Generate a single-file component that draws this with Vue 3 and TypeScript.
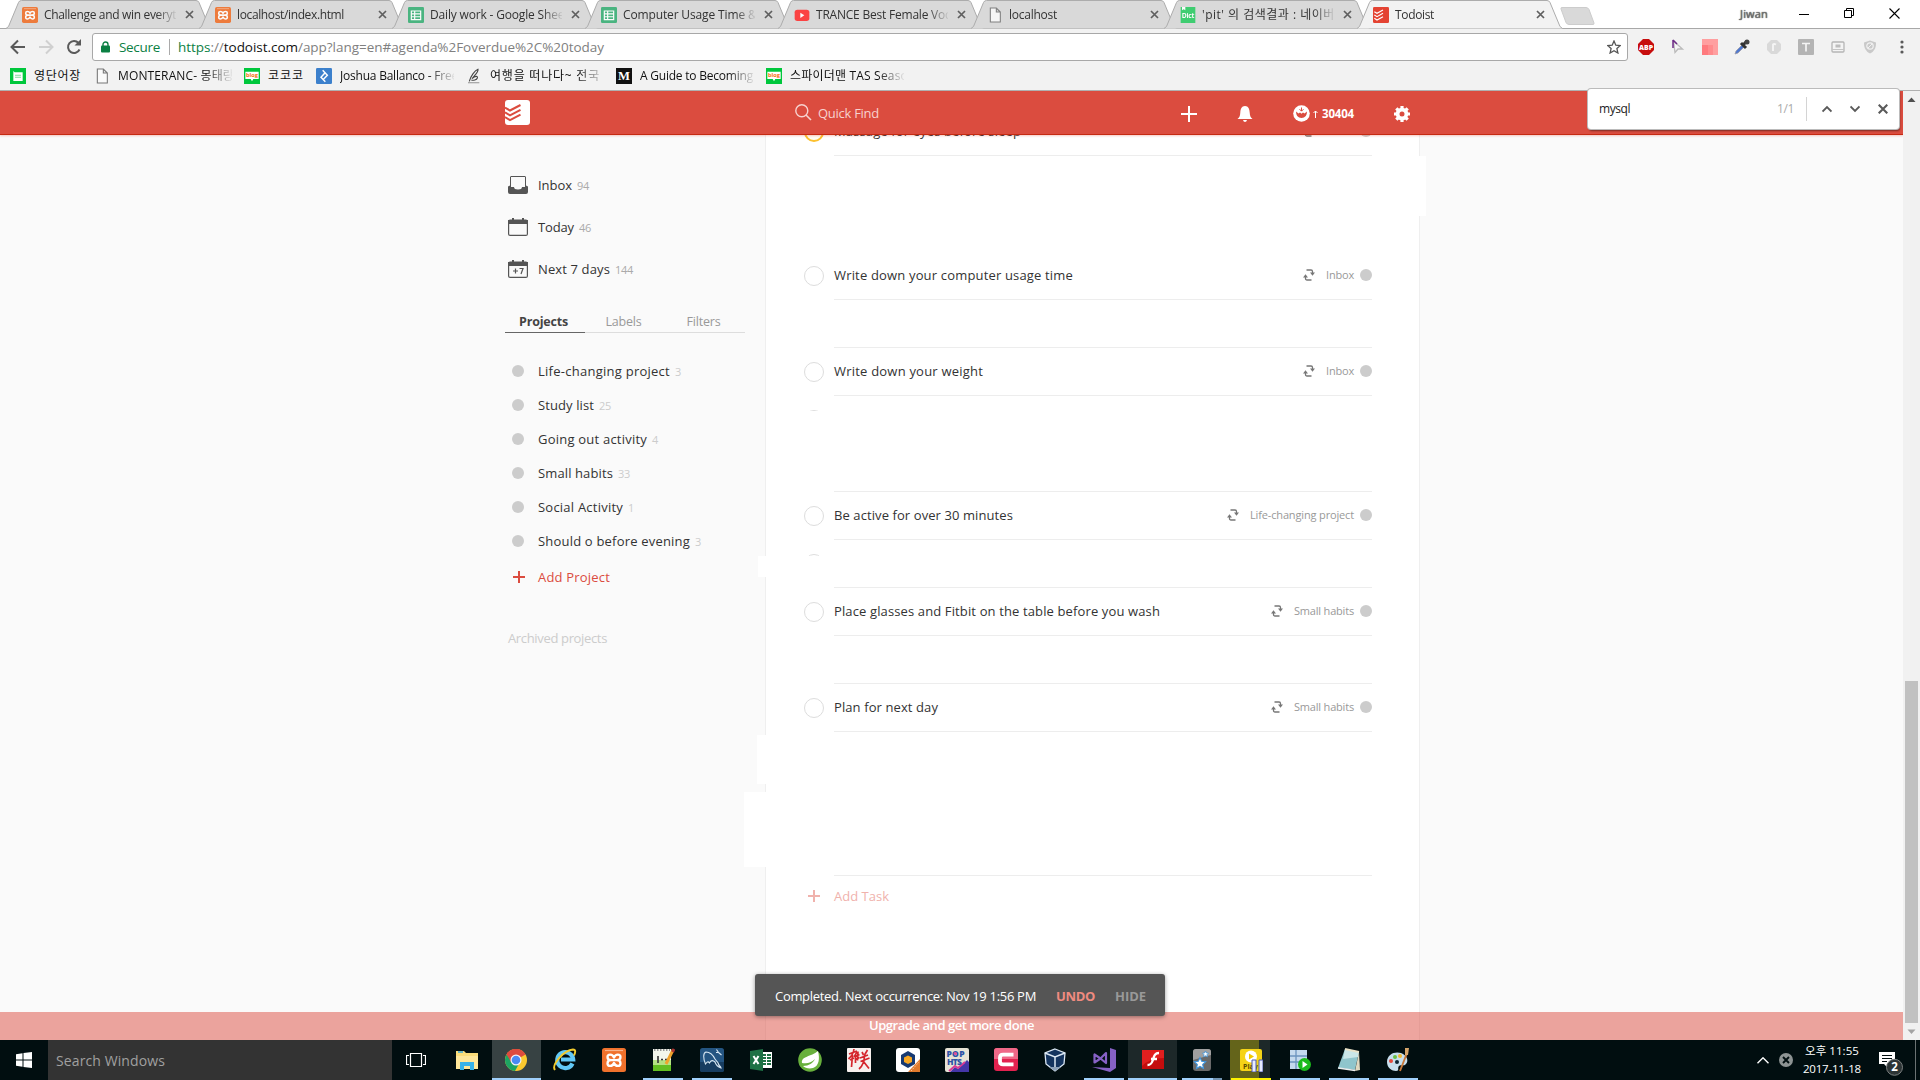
<script setup lang="ts">
import type { Directive } from 'vue'

interface Tab { title: string; icon: string; width?: number; active?: boolean }
interface Bookmark { title: string; icon: string; span: number; text: number; fade?: boolean }
interface Project { name: string; count: number; nameWidth: number; countWidth: number }
interface Row {
  title?: string
  project?: string
  titleWidth?: number
  projectWidth?: number
  line?: boolean
  priority?: boolean
  peek?: number
}
interface Task { icon: string; state?: string }

/* Spreads a label over the given number of pixels. */
const vFit: Directive<HTMLElement, number | undefined> = {
  mounted(el, binding) {
    if (!binding.value) return
    const range = document.createRange()
    range.selectNodeContents(el)
    const natural = range.getBoundingClientRect().width
    const chars = Math.max(1, (el.textContent ?? '').length)
    el.style.letterSpacing = `${((binding.value - natural) / chars).toFixed(3)}px`
  },
}

const xampp =
  '<rect x="0" y="0" width="24" height="24" rx="2.500" fill="#f0712c"/><path d="M3 2.500h18" stroke="#f9b48c" stroke-width="1.200"/><path d="M12 9.500C10.500 5.500 5.500 6 5.500 9c0 2 1.500 3.200 3.500 3.200-2 0-3.500 1-3.500 3.200 0 3.200 5 3.600 6.500-.4 1.500 4 6.500 3.600 6.500.4 0-2.200-1.500-3.200-3.500-3.200 2 0 3.500-1.200 3.500-3.200 0-3-5-3.500-6.500.500zM9 12.200h6" fill="none" stroke="#fff" stroke-width="2.300" stroke-linejoin="round"/>'
const sheet =
  '<rect x="0" y="0" width="24" height="24" rx="2" fill="#3bb077"/><path d="M5 6h14v13H5zM5 10.300h14M5 14.600h14M10 6v13" fill="none" stroke="#fff" stroke-width="1.800"/>'
const page = '<path d="M5 1.500h9l6 6v15H5zM14 1.500v6h6" fill="#fafafa" stroke="#777" stroke-width="1.600"/>'
const blog =
  '<rect width="24" height="24" fill="#00c73c"/><path d="M2 5.500h20v11h-8l-2 3.500-2-3.500H2z" fill="#fff"/><text x="3" y="14" font-size="8.500" font-weight="700" textLength="18" lengthAdjust="spacingAndGlyphs" fill="#f5700f" font-family="Open Sans">blog</text>'

const icons: Record<string, string> = {
  xampp,
  sheet,
  page,
  blog,
  youtube: '<rect x="1" y="4" width="22" height="17" rx="4" fill="#f33"/><path d="M9.500 8.500v8l6-4z" fill="#fff"/>',
  dict: '<rect width="22" height="24" x="1" y="0" fill="#2fcc66"/><path d="M3 0h5v5L5.500 3.500 3 5z" fill="#fff"/><text x="2.500" y="16.500" font-size="10" font-weight="700" textLength="19" fill="#fff" font-family="Open Sans">Dict</text>',
  todoist:
    '<rect width="24" height="24" rx="2" fill="#e44332"/><path d="M2 7l4 2.500 9-5M2 12l4 2.500 9-5M2 17l4 2.500 9-5" fill="none" stroke="#fff" stroke-width="1.700"/>',
  word: '<rect width="24" height="24" fill="#00c73c"/><path d="M5 4.500l2 2h12v13H5z" fill="#fff"/><path d="M7.500 11h9M7.500 14h9" stroke="#7fdc9c" stroke-width="1.600"/>',
  toptal: '<rect width="24" height="24" rx="2" fill="#3c80cc"/><path d="M10 3.500l7 7.500-6.500 6.500M14 20.500L7.500 14 13 8" fill="none" stroke="#fff" stroke-width="2.200"/>',
  quill: '<path d="M3 22h17" stroke="#aaa" stroke-width="2"/><path d="M5 20C7 12 13 4 18 2c1 4-6 10-9 14 5-5 9-4 8-1s-6 4-9 3" fill="none" stroke="#444" stroke-width="1.700"/>',
  medium: '<rect width="24" height="24" fill="#111"/><text x="12" y="18" font-size="19" font-weight="700" text-anchor="middle" fill="#fff" font-family="Liberation Serif">M</text>',

  explorer: '<path d="M1 3h8l2 2h12v16H1z" fill="#fbdd7a"/><path d="M1 8h22v13H1z" fill="#ffe79a"/><path d="M3 4h5" stroke="#3aa6dd" stroke-width="1.500"/><path d="M5 14h14v8h-4v-4H9v4H5z" fill="#38b2e8"/>',
  chrome:
    '<circle cx="12" cy="12" r="11" fill="#fbc92f"/><path d="M12 12L2.500 6.500A11 11 0 0 1 21.500 6.500z" fill="#dd4b3e"/><path d="M2.500 6.500A11 11 0 0 0 11 23l5-9-4-2z" fill="#1da462"/><path d="M12 6.500h9.500A11 11 0 0 0 2.500 6.500L7 14z" fill="#dd4b3e"/><circle cx="12" cy="12" r="5.500" fill="#f4f4f4"/><circle cx="12" cy="12" r="4.300" fill="#4a8af4"/>',
  ie: '<path d="M19.500 15.500a8 8 0 1 1 .7-4H8" fill="none" stroke="#62c8f5" stroke-width="4.200"/><path d="M2 22C-2 17 11 2 20 1.500c3 0 2.500 3 1 6" fill="none" stroke="#f2cb2e" stroke-width="1.900"/>',
  notepp:
    '<path d="M2 1h18v22H2z" fill="#f3f6ec"/><path d="M2 12h18v11H2z" fill="#b4e283"/><path d="M2 17h18v6H2z" fill="#63bf22"/><path d="M3 2h16" stroke="#999" stroke-dasharray="1.500 1.500" stroke-width="2"/><path d="M7 8v7M10 11.500h2M14 11.500h2" stroke="#333" stroke-width="1.600"/><path d="M22 2l-7 14" stroke="#efa22c" stroke-width="3"/><path d="M23 1l-1.500 3" stroke="#a33" stroke-width="3"/>',
  mysql:
    '<rect x="0" y="0" width="24" height="24" rx="2.500" fill="#245582"/><path d="M0 14h24v7.500q0 2.500-2.500 2.500h-19Q0 24 0 21.500z" fill="#173d61"/><path d="M5.500 16C3 10 3 5 6 4c5 0 7 3 9 7 2 3 3 3 3.500 5 .5 2 2 2 2.500 4-3-1-5-3-6-6-2-2-4-2-5.500 1-1.500-2-2.500-1-4 1zM16.500 1.500l2 3h-2.500M18.500 4.500l3 2.500" fill="none" stroke="#d6e6f2" stroke-width="1.100"/>',
  excel:
    '<rect x="12" y="4" width="11" height="16" fill="#fff"/><path d="M14 7h3m1 0h4M14 10h3m1 0h4M14 13h3m1 0h4M14 16h3m1 0h4" stroke="#1e7145" stroke-width="2"/><path d="M1 3l13-2v22L1 21z" fill="#1e7145"/><path d="M4.500 8l5 8M9.500 8l-5 8" stroke="#fff" stroke-width="2"/>',
  spring: '<circle cx="12" cy="12" r="11.800" fill="#68b03c"/><path d="M20 3c2 8 1 15-5 17-4 1-8 0-10-2 6 0 10-3 12-7-4 4-8 5-13 4C3 8 13 9 20 3z" fill="#fff"/>',
  brush:
    '<rect width="24" height="24" rx="1" fill="#f7f0ee"/><path d="M2 6l8-3M7 1C6.500 5 5 8 1.500 11M5.500 7L4.500 19M3 12l4-2M10 4L7 9M8.500 7v8M8.500 8.500l4-2M8.500 11.500l4-2M11 3.500l-.5 9M15 4l1.500 3M20.500 2l-3 5M13 10l8-3M13.500 13.500l9-3.500M17.500 7c0 6-2 11-5.500 14M16.500 13.500l5.500 7" fill="none" stroke="#d5262d" stroke-width="1.700"/>',
  hexagon:
    '<rect width="24" height="24" rx="3" fill="#fff"/><path d="M12 3l7 4v9l-7 4-7-4V7z" fill="#173a73"/><path d="M12 7.500l4 2v4.500l-4 2-4-2V9.500z" fill="#f9a823"/><path d="M24 11v13H12z" fill="#e07a2d"/><path d="M15 23l8-9" stroke="#f9c79a" stroke-width="1" stroke-dasharray="1.500 1"/>',
  pop: '<rect width="24" height="24" rx="2" fill="#e6e3d6"/><path d="M5 24l5-5 3 2 9-9 2 2v10z" fill="#4436a8"/><path d="M4 23l6-5 3 2 7-6" fill="none" stroke="#d93a96" stroke-width="2"/><text fill="#2d52a5" font-family="Open Sans" font-weight="800" font-size="8.500"><tspan x="1.500" y="8.500" textLength="18">POP</tspan><tspan x="2" y="16.500" textLength="15">HTS</tspan></text><circle cx="10.300" cy="5.500" r="1.600" fill="#e24a94"/>',
  cyan: '<rect width="24" height="23" rx="3" fill="#e2224f"/><path d="M0 11V3a3 3 0 0 1 3-3h18a3 3 0 0 1 3 3v8z" fill="#ef6888"/><path d="M19.500 6.700H9Q6 6.700 6 9.500v4Q6 16.300 9 16.300H19.500" fill="none" stroke="#fff" stroke-width="3.800"/>',
  vbox: '<path d="M12 1l10 4-1 11-9 7-9-7L2 5z" fill="#14345f" stroke="#dce8f4" stroke-width="1.300"/><path d="M2 5l10 4 10-4M12 9v14" fill="none" stroke="#dce8f4" stroke-width="1.500"/><path d="M6 19l6 4 6-4" fill="#8ba0b8"/>',
  vs: '<path d="M18 0l6 2v18l-6 4L0 19l18 1z" fill="#8661c5"/><path d="M2.500 6.500v8L8.500 10.500l5.500 4.500V5L8.500 10.500z" fill="none" stroke="#8661c5" stroke-width="2.200" stroke-linejoin="round"/>',
  flash: '<rect x="1" y="2" width="22" height="19" fill="#c40d0d"/><path d="M1 2h22v8q-14 0-22 8z" fill="#e11f1f"/><path d="M18 5c-5 0-5 4-6.500 8-1 3-2 4-5 4M10 11h6" fill="none" stroke="#fff" stroke-width="2.300"/>',
  stars: '<rect x="3" y="1" width="18" height="22" rx="3" fill="#6a6a6a"/><path d="M3 4q0-3 3-3h12q3 0 3 3v3L3 12z" fill="#a0a0a0"/><path d="M10 9.500l1.700 3.700 4 .5-3 2.800.8 4-3.500-2-3.500 2 .8-4-3-2.800 4-.5z" fill="#fff" stroke="#3d94dd" stroke-width="1.100"/><path d="M15.500 3l.9 1.900 2.100.3-1.500 1.500.4 2.100-1.900-1-1.900 1 .4-2.100-1.500-1.500 2.100-.3z" fill="#fff" stroke="#3d94dd" stroke-width=".8"/>',
  pot: '<rect x="1" y="1" width="22" height="22" rx="2" fill="#f5d317"/><circle cx="12" cy="8.500" r="6" fill="#fff"/><path d="M10 5.500v6l5-3z" fill="#f0c800"/><text x="4" y="21" font-size="7" font-weight="700" fill="#5a4c00" font-family="Open Sans">Play</text><path d="M13 12h4v12h-4zM20 12h4v12h-4z" fill="#e8ecff" stroke="#4d58b0" stroke-width="1"/>',
  server: '<rect x="2" y="2" width="17" height="19" fill="#c4d9ee"/><path d="M2 8h17M2 14h17M8 2v19" stroke="#6b93bf" stroke-width="1.300"/><circle cx="16.500" cy="16.500" r="6.500" fill="#1cba1c"/><path d="M14.500 13v7l5-3.500z" fill="#fff"/>',
  notepad: '<path d="M8 1l14 3-4 18-17-2z" fill="#8fc5cc"/><path d="M8 1l14 3-1 5-15 2z" fill="#c9e6e8"/><path d="M8 1l14 3" stroke="#e9e2c8" stroke-width="2"/><path d="M22 4l1 18-5 1z" fill="#dfd8c0"/><path d="M1 20l17 2.500" stroke="#eee" stroke-width="1.300"/>',
  paint: '<path d="M1 14C1 6 9 3 15 5s8 8 5 11-5 0-7 2 1 5-3 5-9-3-9-9z" fill="#c7dfee"/><circle cx="5" cy="13" r="2" fill="#e3493c"/><circle cx="9" cy="9" r="2" fill="#69bf45"/><circle cx="14" cy="8" r="2" fill="#f0b72f"/><circle cx="11" cy="14" r="2" fill="#0b2533"/><path d="M21 5l-7 18" stroke="#c9793a" stroke-width="1.900"/><path d="M19 0h4l-1 7h-3z" fill="#d6a56b"/>',
}

const tabs: Tab[] = [
  { title: 'Challenge and win everythi', icon: 'xampp', width: 142 },
  { title: 'localhost/index.html', icon: 'xampp', width: 107 },
  { title: 'Daily work - Google Sheets', icon: 'sheet', width: 144 },
  { title: 'Computer Usage Time & S', icon: 'sheet', width: 143 },
  { title: 'TRANCE Best Female Voca', icon: 'youtube', width: 141 },
  { title: 'localhost', icon: 'page', width: 48 },
  { title: "'pit' 의 검색결과 : 네이버 사", icon: 'dict', width: 148 },
  { title: 'Todoist', icon: 'todoist', width: 39, active: true },
]

const bookmarks: Bookmark[] = [
  { title: '영단어장', icon: 'word', span: 84, text: 47 },
  { title: 'MONTERANC- 몽태랑', icon: 'page', span: 150, text: 116, fade: true },
  { title: '코코코', icon: 'blog', span: 72, text: 36 },
  { title: 'Joshua Ballanco - Free', icon: 'toptal', span: 150, text: 118, fade: true },
  { title: '여행을 떠나다~ 전국', icon: 'quill', span: 150, text: 110, fade: true },
  { title: 'A Guide to Becoming', icon: 'medium', span: 150, text: 113, fade: true },
  { title: '스파이더맨 TAS Seaso', icon: 'blog', span: 150, text: 118, fade: true },
]

const projects: Project[] = [
  { name: 'Life-changing project', count: 3, nameWidth: 132, countWidth: 6 },
  { name: 'Study list', count: 25, nameWidth: 56, countWidth: 12 },
  { name: 'Going out activity', count: 4, nameWidth: 109, countWidth: 6 },
  { name: 'Small habits', count: 33, nameWidth: 75, countWidth: 12 },
  { name: 'Social Activity', count: 1, nameWidth: 85, countWidth: 6 },
  { name: 'Should o before evening', count: 3, nameWidth: 152, countWidth: 6 },
]

const rows: Row[] = [
  { title: 'Massage for eyes before sleep', titleWidth: 187, project: 'Inbox', projectWidth: 28, line: true, priority: true },
  {},
  {},
  { title: 'Write down your computer usage time', titleWidth: 239, project: 'Inbox', projectWidth: 28, line: true },
  { line: true },
  { title: 'Write down your weight', titleWidth: 149, project: 'Inbox', projectWidth: 28, line: true },
  { peek: 1 },
  { line: true },
  { title: 'Be active for over 30 minutes', titleWidth: 179, project: 'Life-changing project', projectWidth: 104, line: true },
  { line: true, peek: 2 },
  { title: 'Place glasses and Fitbit on the table before you wash', titleWidth: 326, project: 'Small habits', projectWidth: 60, line: true },
  { line: true },
  { title: 'Plan for next day', titleWidth: 104, project: 'Small habits', projectWidth: 60, line: true },
  {},
  {},
  { line: true },
]

const apps: Task[] = [
  { icon: 'explorer' },
  { icon: 'chrome', state: 'current' },
  { icon: 'ie' },
  { icon: 'xampp' },
  { icon: 'notepp', state: 'open' },
  { icon: 'mysql', state: 'open' },
  { icon: 'excel' },
  { icon: 'spring' },
  { icon: 'brush' },
  { icon: 'hexagon' },
  { icon: 'pop' },
  { icon: 'cyan' },
  { icon: 'vbox' },
  { icon: 'vs', state: 'open' },
  { icon: 'flash', state: 'lit' },
  { icon: 'stars', state: 'open stacked' },
  { icon: 'pot', state: 'progress' },
  { icon: 'server', state: 'open' },
  { icon: 'notepad', state: 'open' },
  { icon: 'paint', state: 'open' },
]
</script>

<template>
  <div class="screen">
    <div class="tabstrip">
      <div v-for="(t, i) in tabs" :key="i" class="tab" :class="{ active: t.active }">
        <svg class="tab-shape" width="206" height="29" viewBox="0 0 206 29">
          <path
            d="M0 28.500L2.500 26.500 12.500 2.500Q13.300.5 15.500.5H190Q192 .5 193 2.500L203 26.500 205.500 28.500"
            :fill="t.active ? '#f2f2f2' : '#d9d9d9'"
            stroke="#acacac"
          />
        </svg>
        <svg class="favicon" viewBox="0 0 24 24" v-html="icons[t.icon]" />
        <div class="tab-title"><span v-fit="t.width">{{ t.title }}</span></div>
        <svg class="tab-close" width="9" height="9" viewBox="0 0 9 9"><path d="M1 1l7 7M8 1l-7 7" stroke="#5f5f5f" stroke-width="1.700" /></svg>
      </div>
      <svg class="new-tab" width="35" height="18" viewBox="0 0 35 18">
        <path d="M2 .5H26Q28 .5 29 2.500L34 16Q34.300 17.500 33 17.500H9Q7 17.500 6 15.500L1 2Q.5.5 2 .5z" fill="#d9d9d9" stroke="#ccc" />
      </svg>
      <div class="window-controls">
        <span class="user" v-fit="28">Jiwan</span>
        <svg width="10" height="11" viewBox="0 0 10 11"><path d="M0 6.500h10" stroke="#000" /></svg>
        <svg width="10" height="10" viewBox="0 0 10 10"><path d="M.5 2.500h7v7h-7zM2.500 2V.5h7v7H8" fill="none" stroke="#000" /></svg>
        <svg width="11" height="11" viewBox="0 0 11 11"><path d="M.5.5l10 10M10.500.5l-10 10" stroke="#000" stroke-width="1.100" /></svg>
      </div>
    </div>

    <div class="toolbar">
      <div class="nav">
        <svg width="16" height="16" viewBox="0 0 16 16"><path d="M15 8H2M8 1.500L1.500 8 8 14.500" fill="none" stroke="#5a5a5a" stroke-width="2" /></svg>
        <svg width="16" height="16" viewBox="0 0 16 16"><path d="M1 8h13M8 1.500L14.500 8 8 14.500" fill="none" stroke="#d0d0d0" stroke-width="2" /></svg>
        <svg width="16" height="16" viewBox="0 0 16 16"><path d="M13.500 10.500A6 6 0 1 1 12.500 4" fill="none" stroke="#5a5a5a" stroke-width="2" /><path d="M15 0v6.500H8.500z" fill="#5a5a5a" /></svg>
        <div class="omnibox">
          <svg width="9" height="12" viewBox="0 0 9 12"><path d="M2 6V3.500a2.500 2.500 0 0 1 5 0V6" fill="none" stroke="#0b8043" stroke-width="1.400" /><rect y="4.500" width="9" height="7" rx="1" fill="#0b8043" /></svg>
          <span class="secure" v-fit="41">Secure</span>
          <i class="sep" />
          <span class="url" v-fit="426"><b class="green">https</b><b>://</b><b class="host">todoist.com</b><b>/app?lang=en#agenda%2Foverdue%2C%20today</b></span>
          <svg class="star" width="14" height="14" viewBox="0 0 14 14"><path d="M7 1l1.800 4.200 4.500.4-3.400 3 1 4.400L7 10.700 3.100 13l1-4.400-3.400-3 4.500-.4z" fill="none" stroke="#555" stroke-width="1.300" /></svg>
        </div>
        <div class="extensions">
          <svg viewBox="0 0 16 16"><path d="M5 0h6l5 5v6l-5 5H5l-5-5V5z" fill="#c70d0d" /><text x="1" y="11" font-size="7.500" font-weight="800" fill="#fff" textLength="14" lengthAdjust="spacingAndGlyphs" font-family="Open Sans">ABP</text></svg>
          <svg viewBox="0 0 16 16"><path d="M3.500 2l9 8H8l-3 3.500z" fill="#f6f6f6" stroke="#bbb" stroke-width="1.300" /><path d="M3 1v8M3 1l4 4" stroke="#6d2b86" stroke-width="1.500" /></svg>
          <svg viewBox="0 0 16 16"><path d="M0 0h16v16H0z" fill="#ff9fa0" /><path d="M0 6h6v10H0z" fill="#ff7a7e" /><path d="M6 6h5v10H6z" fill="#ff8b8d" /></svg>
          <svg viewBox="0 0 16 16"><path d="M1 15l1-3 6-6 2 2-6 6z" fill="#4e78cf" stroke="#99a" stroke-width=".8" /><path d="M7 4l5 5M9 6l4-4" stroke="#333" stroke-width="3" /><circle cx="13" cy="3" r="2.500" fill="#444" /></svg>
          <svg viewBox="0 0 16 16"><path d="M5 1h6l4 4v6l-4 4H5l-4-4V5z" fill="#d9d9d9" /><path d="M7 12V5.500q1-1 3 0" fill="none" stroke="#f5f5f5" stroke-width="1.800" /></svg>
          <svg viewBox="0 0 16 16"><rect width="16" height="16" rx="1" fill="#b4b4b4" /><path d="M4 4.500h8M8 4.500v8" stroke="#f4f4f4" stroke-width="1.700" /></svg>
          <svg viewBox="0 0 16 16"><rect x="2" y="3" width="12" height="10" rx="1" fill="#f4f4f4" stroke="#b5b5b5" stroke-width="1.300" /><path d="M5.500 5.500h5v3h-5z" fill="#bdbdbd" /><path d="M2 10.500h12" stroke="#c4c4c4" /></svg>
          <svg viewBox="0 0 16 16"><path d="M8 1.500l6 2q.5 8-6 11-6.500-3-6-11z" fill="#c9c9c9" /><circle cx="8" cy="7" r="3.200" fill="none" stroke="#f1f1f1" stroke-width="1.200" /><path d="M6 9l4-4" stroke="#f1f1f1" /></svg>
          <svg viewBox="0 0 16 16"><g fill="#5a5a5a"><circle cx="8" cy="3" r="1.600" /><circle cx="8" cy="8" r="1.600" /><circle cx="8" cy="13" r="1.600" /></g></svg>
        </div>
      </div>
      <div class="bookmarks">
        <div v-for="b in bookmarks" :key="b.title" class="bookmark" :style="{ width: b.span + 'px' }">
          <svg class="favicon" viewBox="0 0 24 24" v-html="icons[b.icon]" />
          <div :class="{ fade: b.fade }"><span v-fit="b.text">{{ b.title }}</span></div>
        </div>
      </div>

      <div class="findbar">
        <span class="query"><span v-fit="31">mysql</span></span>
        <span class="matches"><span v-fit="17">1/1</span></span>
        <i />
        <svg width="10" height="10" viewBox="0 0 10 10"><path d="M.5 7.500L5 3l4.500 4.500" fill="none" stroke="#5a5a5a" stroke-width="1.900" /></svg>
        <svg width="10" height="10" viewBox="0 0 10 10"><path d="M.5 2.500L5 7l4.500-4.500" fill="none" stroke="#5a5a5a" stroke-width="1.900" /></svg>
        <svg width="10" height="10" viewBox="0 0 10 10"><path d="M.7.7l8.600 8.600M9.300.7L.7 9.300" stroke="#5a5a5a" stroke-width="2.100" /></svg>
      </div>
    </div>

    <div class="viewport">
      <div class="page">
        <header class="topbar">
          <svg class="logo" width="25" height="25" viewBox="0 0 25 25">
            <rect width="25" height="25" rx="3" fill="#fff" />
            <path d="M0 7.500l5 3L15.500 5M0 12.300l5 3L15.500 9.800M0 17.100l5 3L15.500 14.600" fill="none" stroke="#db4c3f" stroke-width="2" />
          </svg>
          <div class="quick-find">
            <svg width="17" height="17" viewBox="0 0 17 17"><circle cx="6.800" cy="6.800" r="6" fill="none" stroke="#f7d2cf" stroke-width="1.400" /><path d="M11 11l5 5" stroke="#f7d2cf" stroke-width="1.600" /></svg>
            <span v-fit="61">Quick Find</span>
          </div>
          <div class="actions">
            <svg width="16" height="16" viewBox="0 0 16 16"><path d="M0 8h16M8 0v16" stroke="#fff" stroke-width="2" /></svg>
            <svg width="16" height="16" viewBox="0 0 16 16"><path d="M8 0c3.500 0 4.500 3 4.700 6.500.2 3.500.8 5 2.800 6.500H.5c2-1.500 2.600-3 2.800-6.500C3.500 3 4.500 0 8 0zM6 14h4q-.5 2-2 2t-2-2z" fill="#fff" /></svg>
            <div class="karma">
              <svg width="17" height="17" viewBox="0 0 17 17"><circle cx="8.500" cy="8.500" r="8.300" fill="#fff" /><path d="M3 6.500l2.500 2 1.500-1 1.500 1.200L10 7.500l1.500 1 2.500-2q0 6.500-5.500 6.500T3 6.500z" fill="#db4c3f" /><path d="M8.500 2.500v3.500M6.500 4.200l2 2 2-2" fill="none" stroke="#db4c3f" /></svg>
              <svg width="5" height="8" viewBox="0 0 5 8"><path d="M2.500 8V1M.5 3l2-2 2 2" fill="none" stroke="#fff" /></svg>
              <b v-fit="32">30404</b>
            </div>
            <svg width="16" height="16" viewBox="0 0 16 16">
              <circle cx="8" cy="8" r="4.400" fill="none" stroke="#fff" stroke-width="3.800" />
              <path d="M8 0v3M8 13v3M0 8h3M13 8h3M2.300 2.300l2.200 2.200M11.500 11.500l2.200 2.200M2.300 13.700l2.200-2.200M11.500 4.500l2.200-2.200" stroke="#fff" stroke-width="3.200" />
            </svg>
          </div>
        </header>

        <div class="content">
          <aside class="sidebar">
            <ul class="filters">
              <li>
                <svg width="20" height="18" viewBox="0 0 20 18"><path d="M2.500 11V1q0-.5.5-.5h14q.5 0 .5.500V11" fill="none" stroke="#555" /><path d="M0 10.500l2-1V11h4q0 2.500 4 2.500t4-2.500h4V9.500l2 1V16q0 2-2 2H2q-2 0-2-2z" fill="#555" /></svg>
                <span v-fit="34">Inbox</span><small v-fit="12">94</small>
              </li>
              <li>
                <svg width="20" height="18" viewBox="0 0 20 18"><rect x=".6" y="2" width="18.800" height="15.400" rx="1.500" fill="none" stroke="#555" stroke-width="1.200" /><path d="M0 2h20v4H0zM4 0h2v3H4zM14 0h2v3h-2z" fill="#555" /></svg>
                <span v-fit="36">Today</span><small v-fit="12">46</small>
              </li>
              <li>
                <svg width="20" height="18" viewBox="0 0 20 18"><rect x=".6" y="2" width="18.800" height="15.400" rx="1.500" fill="none" stroke="#555" stroke-width="1.200" /><path d="M0 2h20v4H0zM4 0h2v3H4zM14 0h2v3h-2z" fill="#555" /><path d="M5 11h5M7.500 8.500v5M11.500 8.500h3.500l-2 5.500" fill="none" stroke="#555" stroke-width="1.200" /></svg>
                <span v-fit="72">Next 7 days</span><small v-fit="18">144</small>
              </li>
            </ul>
            <nav class="switcher">
              <div class="on"><span v-fit="49">Projects</span></div>
              <div><span v-fit="36">Labels</span></div>
              <div><span v-fit="34">Filters</span></div>
            </nav>
            <ul class="projects">
              <li v-for="p in projects" :key="p.name">
                <i class="dot" /><span v-fit="p.nameWidth">{{ p.name }}</span><small v-fit="p.countWidth">{{ p.count }}</small>
              </li>
            </ul>
            <div class="add-project">
              <svg width="12" height="12" viewBox="0 0 12 12"><path d="M0 6h12M6 0v12" stroke="#db4c3f" stroke-width="2" /></svg>
              <span v-fit="72">Add Project</span>
            </div>
            <div class="archived"><span v-fit="99">Archived projects</span></div>
          </aside>

          <section class="agenda">
            <i class="patch p1" /><i class="patch p2" /><i class="patch p3" /><i class="patch p4" />
            <div v-for="(r, i) in rows" :key="i" class="row">
              <div class="check-cell">
                <div v-if="r.peek" class="peek" :style="{ height: r.peek + 'px' }"><i class="check" /></div>
                <i v-if="r.title" class="check" :class="{ priority: r.priority }" />
              </div>
              <div class="row-body" :class="{ line: r.line }">
                <template v-if="r.title">
                  <span class="title" v-fit="r.titleWidth">{{ r.title }}</span>
                  <svg class="repeat" width="12" height="12" viewBox="0 0 12 12"><path d="M3.500 1H8Q9.500 1 9.500 2.500V4M8.500 11H4Q2.500 11 2.500 9.500V8" fill="none" stroke="#777" stroke-width="1.300" /><path d="M7 3.500h5L9.500 6.800zM0 8.500h5L2.500 5.200z" fill="#777" /></svg>
                  <span class="project" v-fit="r.projectWidth">{{ r.project }}</span>
                  <i class="dot" />
                </template>
              </div>
            </div>
            <div class="add-task">
              <svg width="12" height="12" viewBox="0 0 12 12"><path d="M0 6h12M6 0v12" stroke="#f0b2ac" stroke-width="2" /></svg>
              <span v-fit="55">Add Task</span>
            </div>
          </section>
        </div>

        <div class="upgrade"><span v-fit="165">Upgrade and get more done</span></div>
        <div class="toast">
          <span v-fit="261">Completed. Next occurrence: Nov 19 1:56 PM</span>
          <b class="undo" v-fit="39">UNDO</b>
          <b class="hide" v-fit="31">HIDE</b>
        </div>
      </div>
      <div class="scrollbar">
        <svg width="17" height="17" viewBox="0 0 17 17"><path d="M4.500 11h8l-4-4.500z" fill="#505050" /></svg>
        <div class="track"><div class="thumb" /></div>
        <svg width="17" height="17" viewBox="0 0 17 17"><path d="M4.500 6.500h8l-4 4.500z" fill="#a3a3a3" /></svg>
      </div>
    </div>

    <footer class="taskbar">
      <div class="start"><svg width="16" height="16" viewBox="0 0 16 16"><path d="M0 2.200L6.500 1.200V7.500H0zM7.500 1L16 0v7.500H7.500zM0 8.500h6.500v6.300L0 13.800zM7.500 8.500H16V16l-8.500-1z" fill="#fff" /></svg></div>
      <div class="search"><span v-fit="109">Search Windows</span></div>
      <div class="task-view"><svg width="20" height="14" viewBox="0 0 20 14"><path d="M4.500.5h11v13h-11zM3 2.500H.5v9H3M17 2.500h2.500v9H17" fill="none" stroke="#fff" stroke-width="1.200" /></svg></div>
      <div class="apps">
        <div v-for="a in apps" :key="a.icon" class="app" :class="a.state">
          <svg width="24" height="24" viewBox="0 0 24 24" v-html="icons[a.icon]" />
        </div>
      </div>
      <div class="tray">
        <svg width="12" height="7" viewBox="0 0 12 7"><path d="M.5 6.300L6 .8l5.500 5.500" fill="none" stroke="#fff" stroke-width="1.400" /></svg>
        <svg width="14" height="14" viewBox="0 0 14 14"><circle cx="7" cy="7" r="7" fill="#8d9393" /><path d="M4 4l6 6M10 4l-6 6" stroke="#010e10" stroke-width="1.900" /></svg>
        <div class="clock"><span v-fit="54">오후 11:55</span><span v-fit="58">2017-11-18</span></div>
        <svg class="notice" width="25" height="25" viewBox="0 0 25 25">
          <path d="M0 1h16v12H8l0 3-3-3H0z" fill="#fff" /><path d="M3 4.500h10M3 7.500h10M3 10.500h5" stroke="#010e10" />
          <circle cx="15.500" cy="16.300" r="8" fill="#2c3435" stroke="#7c8080" /><text x="15.500" y="20.300" font-size="11.500" font-weight="700" text-anchor="middle" fill="#fff" font-family="Open Sans">2</text>
        </svg>
        <i class="peek-line" />
      </div>
    </footer>
  </div>
</template>

<style>
body {
  margin: 0;
  overflow: hidden;
}
</style>

<style scoped>
.screen {
  width: 1920px;
  height: 1080px;
  display: flex;
  flex-direction: column;
  overflow: hidden;
  background: #fff;
  color: #333;
  font-family: "Open Sans", "Noto Sans CJK KR", sans-serif;
  font-size: 13px;
  line-height: 18px;
}
svg { display: block; flex: none; }
i { display: block; flex: none; }
ul { list-style: none; margin: 0; padding: 0; }
span, small, b { white-space: pre; }

/* browser tabs */
.tabstrip {
  height: 28px;
  display: flex;
  padding-left: 6px;
  position: relative;
  z-index: 1;
}
.tab {
  position: relative;
  width: 205px;
  height: 29px;
  margin-right: -12px;
  box-sizing: border-box;
  padding: 0 17px 0 16px;
  display: flex;
  align-items: center;
  flex: none;
  font-size: 12px;
}
.tab.active { z-index: 2; }
.tab-shape { position: absolute; left: 0; top: 0; }
.favicon { width: 16px; height: 16px; position: relative; }
.tab-title {
  position: relative;
  margin-left: 6px;
  width: 132px;
  overflow: hidden;
  mask-image: linear-gradient(to right, #000 112px, transparent 134px);
}
.tab:not(.active) .favicon { opacity: 0.9; }
.tab-close { position: relative; margin-left: 9px; }
.new-tab { margin: 7px 0 0 10px; }
.window-controls {
  margin-left: auto;
  padding: 0 20px 0 0;
  display: flex;
  height: 26px;
  align-items: center;
}
.user { font-size: 11px; margin-right: 31px; color: #777; text-shadow: 0 0 1px #000; margin-top: 2px; }
.window-controls svg { margin-right: 35px; }
.window-controls svg:last-child { margin-right: 0; }

/* address bar and bookmarks */
.toolbar {
  height: 63px;
  box-sizing: border-box;
  border-top: 1px solid #a8a8a8;
  border-bottom: 1px solid #b0b0b0;
  background: #f2f2f2;
  position: relative;
}
.nav { display: flex; align-items: center; padding: 4px 0 0 10px; }
.nav > svg { margin-right: 12px; }
.nav > svg:nth-child(3) { margin-right: 10px; }
.omnibox {
  width: 1536px;
  height: 28px;
  box-sizing: border-box;
  border: 1px solid #a8a8a8;
  border-radius: 3px;
  background: #fff;
  display: flex;
  align-items: center;
  padding: 0 6px 0 8px;
  font-size: 13.5px;
}
.secure { color: #0b8043; margin-left: 9px; width: 50px; }
.sep { width: 1px; height: 16px; background: #aaa; margin-right: 8px; }
.url b { font-weight: 400; color: #808080; }
.url b.green { color: #0b8043; }
.url b.host { color: #111; }
.star { margin-left: auto; }
.extensions { display: flex; gap: 16px; margin-left: 10px; }
.extensions svg { width: 16px; height: 16px; }
.bookmarks { display: flex; padding: 6px 0 0 10px; color: #111; font-size: 12px; }
.bookmark { display: flex; align-items: center; gap: 8px; height: 18px; }
.fade { width: 114px; overflow: hidden; mask-image: linear-gradient(to right, #000 88px, transparent 116px); }

.findbar {
  position: absolute;
  z-index: 20;
  left: 1588px;
  top: 60px;
  width: 311px;
  height: 40px;
  box-sizing: border-box;
  padding-left: 11px;
  background: #fff;
  border-radius: 3px;
  box-shadow: 0 0 0 1px #bbb, 1px 2px 2px rgba(0, 0, 0, 0.45);
  display: flex;
  align-items: center;
  font-size: 12px;
  color: #222;
}
.query { width: 178px; flex: none; }
.matches { width: 29px; flex: none; color: #aaa; }
.findbar i { width: 1px; height: 24px; background: #d4d4d4; margin-right: 15px; }
.findbar svg { margin-right: 18px; }

/* application */
.viewport { display: flex; height: 949px; }
.page { width: 1903px; position: relative; overflow: hidden; background: #fafafa; }
.topbar {
  position: relative;
  z-index: 5;
  height: 44px;
  box-sizing: border-box;
  background: #db4c3f;
  border-bottom: 1px solid #c62a12;
  box-shadow: 0 1px 2px rgba(219, 76, 63, 0.3);
  display: flex;
  align-items: center;
  padding: 0 0 0 505px;
}
.quick-find {
  display: flex;
  align-items: center;
  gap: 6px;
  width: 386px;
  margin-left: 265px;
  color: #f7d2cf;
}
.actions { display: flex; align-items: center; gap: 40px; margin-top: 2px; }
.karma { display: flex; align-items: center; gap: 3px; color: #fff; font-size: 11.5px; width: 61px; }
.karma b { margin-left: 1px; }

.content { display: flex; gap: 20px; }
.sidebar { width: 240px; padding: 29px 0 0 505px; }
.filters li { display: flex; align-items: center; height: 42px; padding-left: 3px; }
.filters li span, .projects li span, .add-project span { margin-left: 10px; }
small { font-size: 11px; color: #aaa; margin-left: 5px; padding-top: 1px; }
.projects small { color: #ccc; }
.switcher { display: flex; margin-top: 20px; border-bottom: 1px solid #ddd; color: #999; height: 22px; font-size: 12.5px; }
.switcher div { width: 80px; box-sizing: border-box; padding-right: 3px; text-align: center; height: 23px; line-height: 24px; }
.switcher .on { border-bottom: 1px solid #666; color: #444; font-weight: 700; }
.projects { margin-top: 21px; }
.projects li { display: flex; align-items: center; height: 34px; padding-left: 7px; }
.dot { width: 12px; height: 12px; border-radius: 50%; background: #ccc; }
.projects .dot { margin-top: -1px; }
.projects li span { margin-left: 14px; }
.add-project { display: flex; align-items: center; height: 34px; margin-top: 2px; padding-left: 8px; color: #db4c3f; }
.add-project span { margin-left: 13px; }
.archived { margin: 35px 0 0 3px; color: #ccc; }

.agenda {
  position: relative;
  width: 655px;
  height: 935px;
  margin-top: -27px;
  box-sizing: border-box;
  padding-left: 38px;
  background: #fff;
  border: solid #efefef;
  border-width: 0 1px;
}
.row { display: flex; height: 48px; position: relative; }
.check-cell { width: 30px; display: flex; align-items: center; }
.check { width: 20px; height: 20px; box-sizing: border-box; border: 1px solid #ddd; border-radius: 50%; }
.check.priority { border: 2px solid #fcc02e; background: #fffdf3; }
.peek { overflow: hidden; align-self: flex-start; margin-top: 14px; }
.row-body { width: 538px; display: flex; align-items: center; box-sizing: border-box; border-bottom: 1px solid transparent; padding-bottom: 2px; }
.row-body.line { border-bottom-color: #ededed; }
.title { margin-right: auto; }
.repeat { margin-top: 1px; }
.project { font-size: 11px; line-height: 16px; color: #999; margin: 0 6px 0 11px; }
.add-task { display: flex; align-items: center; height: 40px; color: #f0b2ac; padding-left: 4px; gap: 14px; }
.patch { position: absolute; background: #fff; }
.p1 { left: 640px; width: 20px; top: 48px; height: 60px; }
.p2 { left: -8px; width: 20px; top: 448px; height: 21px; }
.p3 { left: -9px; width: 20px; top: 627px; height: 49px; }
.p4 { left: -22px; width: 30px; top: 684px; height: 75px; }

.upgrade {
  position: absolute;
  inset: auto 0 0 0;
  height: 28px;
  background: rgba(219, 76, 63, 0.5);
  color: #fff;
  line-height: 26px;
  padding-left: 869px;
  font-weight: 600;
}
.toast {
  position: absolute;
  left: 755px;
  top: 883px;
  width: 410px;
  height: 42px;
  box-sizing: border-box;
  padding-left: 20px;
  display: flex;
  align-items: center;
  background: #555;
  color: #fff;
  border-radius: 3px;
  box-shadow: 0 1px 4px rgba(0, 0, 0, 0.4);
  padding-top: 2px;
}
.toast .undo { color: #f08b80; margin-left: 20px; }
.toast .hide { color: #999; margin-left: 20px; }

.scrollbar { width: 17px; background: #f1f1f1; display: flex; flex-direction: column; }
.track { flex: 1; display: flex; }
.thumb { margin: 573px 2px 0 2px; width: 13px; height: 342px; background: #c1c1c1; }

/* taskbar */
.taskbar { height: 40px; background: #010e10; display: flex; align-items: center; color: #fff; }
.start { width: 48px; display: flex; justify-content: center; }
.search { width: 344px; height: 40px; box-sizing: border-box; padding-left: 8px; background: #333; color: #a0a0a0; line-height: 42px; font-size: 14px; }
.task-view { width: 51px; padding-left: 14px; box-sizing: border-box; }
.apps { width: 979px; height: 40px; display: flex; }
.app { position: relative; flex: 1; display: flex; align-items: center; justify-content: center; }
.app::after { content: ""; position: absolute; left: 4.5px; right: 4.5px; bottom: 0; height: 2px; }
.app.current { background: #374243; }
.app.lit { background: #1d2829; }
.app.open::after, .app.current::after, .app.lit::after { background: #a0d0fb; }
.app.current::after, .app.lit::after { left: 0; right: 0; }
.app.stacked::after { background: linear-gradient(to right, #a0d0fb 31px, #7395b2 31px); }
.app.progress { background: linear-gradient(to right, transparent 4.5px, #64641a 4.5px, #64641a 33px, #1d2829 33px, #1d2829 44.5px, transparent 44.5px); }
.app.progress::after { background: #fff200; }
.tray { display: flex; align-items: center; margin-left: auto; padding-right: 4px; height: 40px; }
.tray > svg:nth-child(2) { margin: 0 15px 0 10px; }
.tray > svg:nth-child(-n + 2) { position: relative; left: 7px; }
.clock { width: 62px; display: flex; flex-direction: column; align-items: center; font-size: 11.5px; line-height: 18px; }
.notice { margin: 6px 0 0 16px; }
.peek-line { width: 1px; height: 40px; background: #6b7273; margin-left: 11px; }
</style>
